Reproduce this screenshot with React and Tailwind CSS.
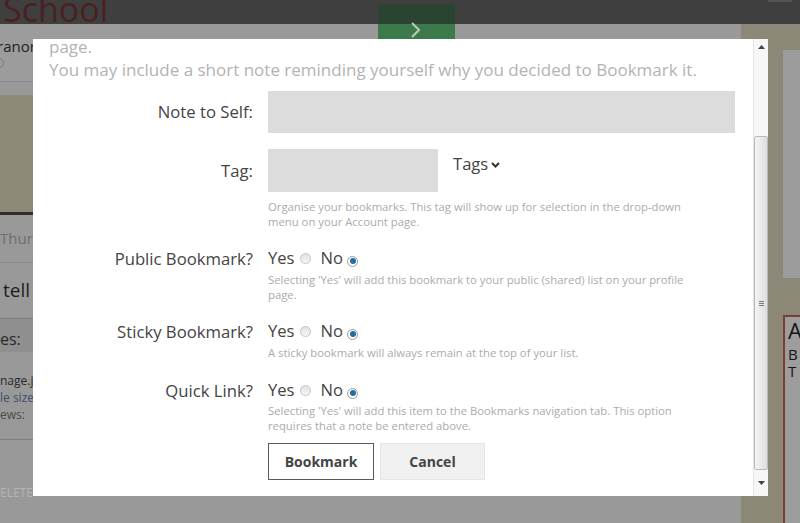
import React from "react";

const font = { fontFamily: '"Open Sans", "Liberation Sans", sans-serif' };

function Radio({ checked }) {
  if (checked) {
    return (
      <span className="inline-flex items-center justify-center w-[11px] h-[11px] rounded-full border border-[#9a9a9a] bg-white">
        <span className="w-[6px] h-[6px] rounded-full bg-[#1f6ea6]" />
      </span>
    );
  }
  return (
    <span className="inline-block w-[11px] h-[11px] rounded-full border border-[#c4c4c4] bg-gradient-to-b from-[#e2e2e2] to-[#f6f6f6]" />
  );
}

function YesNo() {
  return (
    <div className="flex items-center h-[23px] text-[16.6px] text-[#444]">
      <span>Yes</span>
      <span className="ml-[5px]"><Radio /></span>
      <span className="ml-[10px]">No</span>
      <span className="ml-[4px]"><Radio checked /></span>
    </div>
  );
}

function Help({ children, className = "" }) {
  return (
    <p className={`text-[11.3px] leading-[15px] text-[#ababab] max-w-[432px] ${className}`}>{children}</p>
  );
}

function Label({ children, h }) {
  return (
    <div className={`flex items-center justify-end text-[16.7px] text-[#444] ${h}`}>{children}</div>
  );
}

function Background() {
  return (
    <div className="flex flex-col w-full h-full bg-[#999]">
      {/* header bar */}
      <div className="relative h-[24px] bg-[#3f3f3f] shrink-0 z-10">
        <div className="absolute left-[3px] top-[-11px] text-[34px] leading-[40px] text-[#4a2020]">School</div>
        <div className="absolute left-[378px] top-[4px] w-[77px] h-[36px] rounded-t-[4px] overflow-hidden flex flex-col">
          <div className="h-[20px] bg-[#2b4431]" />
          <div className="flex-1 bg-[#3d7a4b]" />
          <svg className="absolute left-[32px] top-[17px]" width="12" height="18" viewBox="0 0 12 18">
            <path d="M2 2 L9 9 L2 16" fill="none" stroke="#b9cbbd" strokeWidth="2" />
          </svg>
        </div>
        <div className="absolute right-[8px] top-0 w-[24px] h-[2px] bg-[#555]" />
      </div>
      <div className="flex flex-1">
        {/* left column */}
        <div className="w-[120px] flex flex-col text-[#222]">
          <div className="h-[58px] border-b border-[#8a8a8a] pt-[12px] bg-[#9c9c9c]">
            <div className="text-[15px] leading-[20px] -ml-[3px]">ranor</div>
            <div className="-ml-[6px] mt-[2px] w-[10px] h-[10px] rounded-full border border-[#7a7a7a]" />
          </div>
          <div className="h-[13px]" />
          <div className="h-[120px] bg-[#8d8a79] border-b-[3px] border-[#2e2e2e]" />
          <div className="h-[48px] flex items-center border-b border-[#8a8a8a] text-[15px] text-[#6f6f6f]">Thurs</div>
          <div className="h-[56px] flex items-center pl-[3px] border-b border-[#7e7e7e] text-[19px] text-[#1e1e1e]">tell</div>
          <div className="h-[33px] flex items-center pt-[6px] bg-[#8f8f8f] text-[16px] text-[#2a2a2a]">es:</div>
          <div className="h-[88px] pt-[20px] text-[12px] leading-[17px] border-b border-[#7e7e7e]">
            <div className="text-[#2a2a2a]">nage.jpg</div>
            <div className="text-[#3d4f6a]">le size:</div>
            <div className="text-[#4a4a4a]">ews:</div>
          </div>
          <div className="flex-1 pt-[44px] text-[12px] text-[#b4b4b4]">ELETE</div>
        </div>
        <div className="flex-1" />
        {/* right column */}
        <div className="w-[59px] bg-[#8c8877] flex flex-col pl-[42px] pt-[26px]">
          <div className="h-[228px] bg-[#9c9c9c]" />
          <div className="mt-[37px] flex-1 bg-[#9d9d9d] border-l-2 border-t-2 border-[#7b3b36] pl-[3px] text-[#141414]">
            <div className="text-[22px] leading-[26px]">A</div>
            <div className="text-[15px] leading-[18px] mt-[2px]">B</div>
            <div className="text-[15px] leading-[17px]">T</div>
          </div>
        </div>
      </div>
    </div>
  );
}

function Scrollbar() {
  return (
    <div className="w-[15px] bg-[#f7f7f7] border-l border-[#e6e6e6] flex flex-col items-center">
      <div className="h-[16px] flex items-center justify-center">
        <svg width="7" height="4" viewBox="0 0 7 4"><path d="M0 4 L3.5 0 L7 4 Z" fill="#444" /></svg>
      </div>
      <div className="mt-[81px] w-[14px] h-[334px] rounded-[2px] border border-[#b9b9b9] bg-gradient-to-r from-[#f4f4f4] to-[#dedede] flex items-center justify-center">
        <div className="flex flex-col gap-[1px]">
          <div className="w-[5px] h-[1px] bg-[#777]" />
          <div className="w-[5px] h-[1px] bg-[#777]" />
          <div className="w-[5px] h-[1px] bg-[#777]" />
        </div>
      </div>
      <div className="flex-1 flex items-center justify-center">
        <svg width="7" height="4" viewBox="0 0 7 4"><path d="M0 0 L3.5 4 L7 0 Z" fill="#444" /></svg>
      </div>
    </div>
  );
}

export default function App() {
  return (
    <div className="relative w-[800px] h-[523px] overflow-hidden" style={font}>
      <Background />

      {/* modal */}
      <div className="absolute left-[33px] top-[39px] w-[735px] h-[457px] bg-white flex z-20">
        <div className="flex-1 overflow-hidden pl-[16px] pr-[18px]">
          <div className="-mt-[4px] text-[17px] leading-[23px] text-[#b3b3b3] whitespace-nowrap">
            <p>page.</p>
            <p>You may include a short note reminding yourself why you decided to Bookmark it.</p>
          </div>

          <div className="grid grid-cols-[204px_1fr] gap-x-[15px] mt-[10px]">
            <Label h="h-[42px]">Note to Self:</Label>
            <div className="h-[42px] bg-[#dcdcdc]" />
          </div>

          <div className="grid grid-cols-[204px_1fr] gap-x-[15px] mt-[16px]">
            <Label h="h-[43px]">Tag:</Label>
            <div>
              <div className="flex items-start">
                <div className="w-[170px] h-[43px] bg-[#dcdcdc]" />
                <div className="ml-[15px] pt-[4px] flex items-center text-[16.6px] leading-[22px] text-[#444]">
                  <span>Tags</span>
                  <svg className="ml-[3px] mt-[2px]" width="9" height="6" viewBox="0 0 9 6">
                    <path d="M1 1 L4.5 4.5 L8 1" fill="none" stroke="#333" strokeWidth="2" />
                  </svg>
                </div>
              </div>
              <Help className="mt-[7px]">
                Organise your bookmarks. This tag will show up for selection in the drop-down menu on your Account page.
              </Help>
            </div>
          </div>

          <div className="grid grid-cols-[204px_1fr] gap-x-[15px] mt-[18px]">
            <Label h="h-[23px]">Public Bookmark?</Label>
            <div>
              <YesNo />
              <Help className="mt-[2px]">
                Selecting 'Yes' will add this bookmark to your public (shared) list on your profile page.
              </Help>
            </div>
          </div>

          <div className="grid grid-cols-[204px_1fr] gap-x-[15px] mt-[18px]">
            <Label h="h-[23px]">Sticky Bookmark?</Label>
            <div>
              <YesNo />
              <Help className="mt-[2px]">A sticky bookmark will always remain at the top of your list.</Help>
            </div>
          </div>

          <div className="grid grid-cols-[204px_1fr] gap-x-[15px] mt-[19px]">
            <Label h="h-[23px]">Quick Link?</Label>
            <div>
              <YesNo />
              <Help className="mt-[1px]">
                Selecting 'Yes' will add this item to the Bookmarks navigation tab. This option requires that a note be entered above.
              </Help>
              <div className="flex gap-[6px] mt-[10px]">
                <button className="w-[106px] h-[37px] border border-[#5a5a5a] bg-white text-[14px] font-bold text-[#444]">
                  Bookmark
                </button>
                <button className="w-[105px] h-[37px] border border-[#e6e6e6] bg-[#f0f0f0] text-[14px] font-bold text-[#444]">
                  Cancel
                </button>
              </div>
            </div>
          </div>
        </div>
        <Scrollbar />
      </div>
    </div>
  );
}
